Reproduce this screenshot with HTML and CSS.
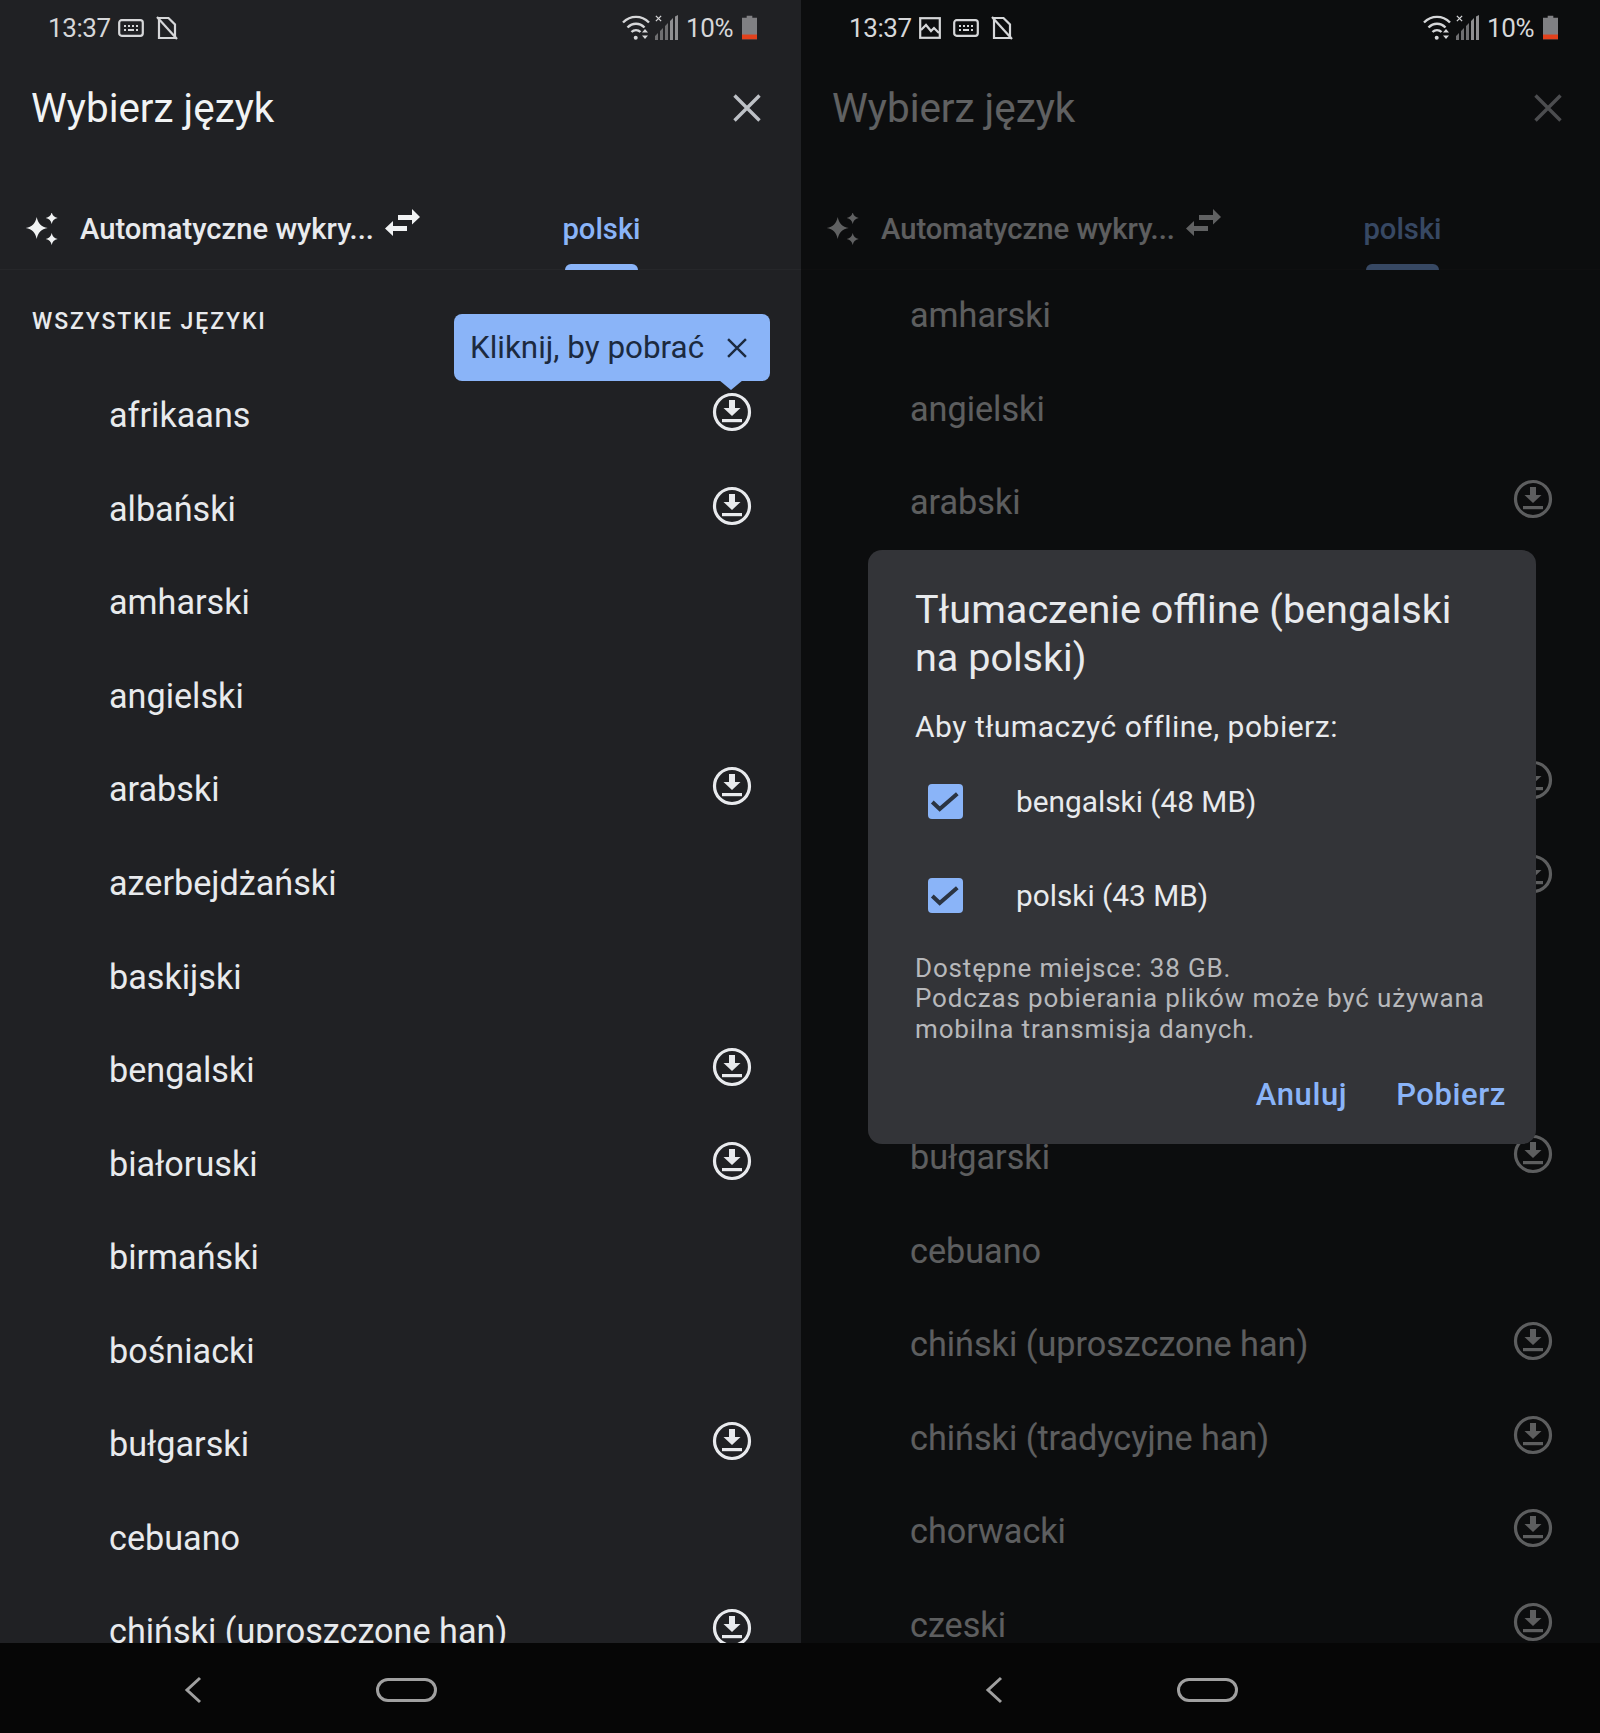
FILE: index.html
```html
<!DOCTYPE html>
<html lang="pl">
<head>
<meta charset="utf-8">
<title>Wybierz język</title>
<link rel="stylesheet" href="styles.css">
</head>
<body>
<svg class="sprite" aria-hidden="true">
  <symbol id="i-dl" viewBox="0 0 40 40"><circle cx="20" cy="20" r="17.5" fill="none" stroke="currentColor" stroke-width="3.2"/><path d="M17 8h6v8h5.5L20 24l-8.5-8H17z" fill="currentColor"/><rect x="10" y="27" width="20" height="3.2" fill="currentColor"/></symbol>
  <symbol id="i-close" viewBox="0 0 28 28"><path d="M1.5 1.5l25 25M26.5 1.5l-25 25" fill="none" stroke="currentColor" stroke-width="3.4"/></symbol>
  <symbol id="i-spark" viewBox="0 0 34 32"><path d="M11.700 4c1.300 6.500 4.500 9.700 11 11-6.500 1.300-9.700 4.500-11 11-1.300-6.500-4.500-9.700-11-11 6.500-1.300 9.700-4.500 11-11zM26.700-1c.7 3.500 2.500 5.300 6 6-3.500.7-5.300 2.500-6 6-.7-3.500-2.500-5.300-6-6 3.500-.7 5.300-2.500 6-6zM26.700 20c.7 3.500 2.500 5.300 6 6-3.500.7-5.300 2.500-6 6-.7-3.500-2.500-5.300-6-6 3.500-.7 5.300-2.500 6-6z" fill="currentColor"/></symbol>
  <symbol id="i-swap" viewBox="0 0 36 28"><path d="M13 6H27V0l8 8-8 7.500V11H13z" fill="currentColor"/><path d="M22 17H8V12L0 19.500 8 27V22H22z" fill="currentColor"/></symbol>
  <symbol id="i-kbd" viewBox="0 0 26 18"><rect x="1.200" y="1.200" width="23.600" height="15.600" rx="2.500" fill="none" stroke="currentColor" stroke-width="2.200"/><path d="M6 6h2v2H6zM10 6h2v2h-2zM14 6h2v2h-2zM18 6h2v2h-2zM6 10h2v2H6zM10 10h6v2h-6zM18 10h2v2h-2z" fill="currentColor"/></symbol>
  <symbol id="i-nosim" viewBox="0 0 22 24"><path d="M3 2h9.500L19 8.500V22H3z" fill="none" stroke="currentColor" stroke-width="2.200"/><path d="M1 1l20 22" stroke="currentColor" stroke-width="2.200"/></symbol>
  <symbol id="i-img" viewBox="0 0 22 22"><rect x="1.200" y="1.200" width="19.600" height="19.600" fill="none" stroke="currentColor" stroke-width="2.200"/><path d="M2 13l5-5 5 6 3-3 5 5" fill="none" stroke="currentColor" stroke-width="2.200"/></symbol>
  <symbol id="i-wifi" viewBox="0 0 28 25"><path d="M1 7.500C8.500 0 19.500 0 27 7.500M5.500 12.500C10.500 7.500 17.500 7.500 22.500 12.500M9.500 17C12 14.500 16 14.500 18.500 17" fill="none" stroke="currentColor" stroke-width="2.400"/><circle cx="13.700" cy="22.800" r="2" fill="currentColor"/><path d="M20 17.500l3-3.500 3 3.500zM20 20.500h6l-3 3.500z" fill="currentColor"/></symbol>
  <symbol id="i-signal" viewBox="0 0 24 25"><path d="M0 21l3-3v7H0zM5 16l3-3v12H5zM10 11l3-3v17h-3z" fill="#6f6f71"/><path d="M15 6l3-3v22h-3zM20 1.500l3-1.500v25h-3z" fill="#8f8f91"/></symbol>
  <symbol id="i-x" viewBox="0 0 8 8"><path d="M1 1l6 6M7 1l-6 6" stroke="currentColor" stroke-width="1.500"/></symbol>
  <symbol id="i-batt" viewBox="0 0 16 25"><path d="M5 0h6v2h5v23H0V2h5z" fill="#808083"/><rect y="20" width="16" height="5" fill="#e2411c"/></symbol>
  <symbol id="i-back" viewBox="0 0 18 28"><path d="M16 2L3 14l13 12" fill="none" stroke="currentColor" stroke-width="3"/></symbol>
  <symbol id="i-check" viewBox="0 0 35 35"><path d="M4.300 18l7.400 7L29.300 9.700" fill="none" stroke="currentColor" stroke-width="4"/></symbol>
</svg>

<main class="screens">
  <section class="panel">
    <div class="status">
      <div class="status-left">
        <span class="time">13:37</span>
        <svg class="ic-kbd"><use href="#i-kbd"/></svg>
        <svg class="ic-nosim"><use href="#i-nosim"/></svg>
      </div>
      <div class="status-right">
        <svg class="ic-wifi"><use href="#i-wifi"/></svg>
        <span class="signal"><svg class="ic-signal"><use href="#i-signal"/></svg><svg class="ic-x"><use href="#i-x"/></svg></span>
        <span class="pct">10%</span>
        <svg class="ic-batt"><use href="#i-batt"/></svg>
      </div>
    </div>
    <header class="title-row">
      <h1 class="title">Wybierz język</h1>
      <svg class="ic-close"><use href="#i-close"/></svg>
    </header>
    <div class="tabs">
      <div class="tab-source">
        <svg class="ic-spark"><use href="#i-spark"/></svg>
        <span class="tab-label">Automatyczne wykry...</span>
        <svg class="ic-swap"><use href="#i-swap"/></svg>
      </div>
      <div class="tab-target">
        <span class="tab-label tab-active">polski</span>
        <span class="tab-bar"></span>
      </div>
    </div>
    <div class="list">
      <div class="section-label">WSZYSTKIE JĘZYKI</div>
      <div class="row"><span>afrikaans</span><svg class="ic-dl"><use href="#i-dl"/></svg></div>
      <div class="row"><span>albański</span><svg class="ic-dl"><use href="#i-dl"/></svg></div>
      <div class="row"><span>amharski</span></div>
      <div class="row"><span>angielski</span></div>
      <div class="row"><span>arabski</span><svg class="ic-dl"><use href="#i-dl"/></svg></div>
      <div class="row"><span>azerbejdżański</span></div>
      <div class="row"><span>baskijski</span></div>
      <div class="row"><span>bengalski</span><svg class="ic-dl"><use href="#i-dl"/></svg></div>
      <div class="row"><span>białoruski</span><svg class="ic-dl"><use href="#i-dl"/></svg></div>
      <div class="row"><span>birmański</span></div>
      <div class="row"><span>bośniacki</span></div>
      <div class="row"><span>bułgarski</span><svg class="ic-dl"><use href="#i-dl"/></svg></div>
      <div class="row"><span>cebuano</span></div>
      <div class="row"><span>chiński (uproszczone han)</span><svg class="ic-dl"><use href="#i-dl"/></svg></div>
    </div>
    <div class="tooltip">
      <span>Kliknij, by pobrać</span>
      <svg class="ic-tipclose"><use href="#i-close"/></svg>
    </div>
    <nav class="navbar">
      <svg class="ic-back"><use href="#i-back"/></svg>
      <span class="home"></span>
    </nav>
  </section>

  <section class="panel panel-dim">
    <div class="status">
      <div class="status-left">
        <span class="time">13:37</span>
        <svg class="ic-img"><use href="#i-img"/></svg>
        <svg class="ic-kbd"><use href="#i-kbd"/></svg>
        <svg class="ic-nosim"><use href="#i-nosim"/></svg>
      </div>
      <div class="status-right">
        <svg class="ic-wifi"><use href="#i-wifi"/></svg>
        <span class="signal"><svg class="ic-signal"><use href="#i-signal"/></svg><svg class="ic-x"><use href="#i-x"/></svg></span>
        <span class="pct">10%</span>
        <svg class="ic-batt"><use href="#i-batt"/></svg>
      </div>
    </div>
    <header class="title-row">
      <h1 class="title">Wybierz język</h1>
      <svg class="ic-close"><use href="#i-close"/></svg>
    </header>
    <div class="tabs">
      <div class="tab-source">
        <svg class="ic-spark"><use href="#i-spark"/></svg>
        <span class="tab-label">Automatyczne wykry...</span>
        <svg class="ic-swap"><use href="#i-swap"/></svg>
      </div>
      <div class="tab-target">
        <span class="tab-label tab-active">polski</span>
        <span class="tab-bar"></span>
      </div>
    </div>
    <div class="list list-scrolled">
      <div class="row"><span>amharski</span></div>
      <div class="row"><span>angielski</span></div>
      <div class="row"><span>arabski</span><svg class="ic-dl"><use href="#i-dl"/></svg></div>
      <div class="row"><span>azerbejdżański</span></div>
      <div class="row"><span>baskijski</span></div>
      <div class="row"><span>bengalski</span><svg class="ic-dl"><use href="#i-dl"/></svg></div>
      <div class="row"><span>białoruski</span><svg class="ic-dl"><use href="#i-dl"/></svg></div>
      <div class="row"><span>birmański</span></div>
      <div class="row"><span>bośniacki</span></div>
      <div class="row"><span>bułgarski</span><svg class="ic-dl"><use href="#i-dl"/></svg></div>
      <div class="row"><span>cebuano</span></div>
      <div class="row"><span>chiński (uproszczone han)</span><svg class="ic-dl"><use href="#i-dl"/></svg></div>
      <div class="row"><span>chiński (tradycyjne han)</span><svg class="ic-dl"><use href="#i-dl"/></svg></div>
      <div class="row"><span>chorwacki</span><svg class="ic-dl"><use href="#i-dl"/></svg></div>
      <div class="row"><span>czeski</span><svg class="ic-dl"><use href="#i-dl"/></svg></div>
    </div>
    <div class="scrim"></div>
    <div class="dialog" role="dialog">
      <h2 class="dialog-title">Tłumaczenie offline (bengalski na&nbsp;polski)</h2>
      <p class="dialog-lead">Aby tłumaczyć offline, pobierz:</p>
      <div class="check-row"><span class="checkbox"><svg class="ic-check"><use href="#i-check"/></svg></span><span>bengalski (48 MB)</span></div>
      <div class="check-row"><span class="checkbox"><svg class="ic-check"><use href="#i-check"/></svg></span><span>polski (43 MB)</span></div>
      <p class="dialog-note">Dostępne miejsce: 38 GB.<br>Podczas pobierania plików może być używana mobilna transmisja danych.</p>
      <div class="dialog-actions"><span>Anuluj</span><span>Pobierz</span></div>
    </div>
    <nav class="navbar">
      <svg class="ic-back"><use href="#i-back"/></svg>
      <span class="home"></span>
    </nav>
  </section>
</main>
</body>
</html>
```

FILE: styles.css
```css
* { box-sizing: border-box; }
html, body { margin: 0; height: 100%; }
body { background: #0d0d0e; font-family: Roboto, "Liberation Sans", sans-serif; overflow: hidden; }
.sprite { display: none; }
svg { display: block; flex: none; }

.screens { display: grid; grid-template-columns: 801px 801px; height: 1733px; }
.panel { position: relative; display: flex; flex-direction: column; height: 1733px; overflow: hidden; background: #202124; color: #e8eaed; }

.status { position: relative; z-index: 2; flex: none; height: 54px; display: flex; align-items: center; justify-content: space-between; padding: 1px 44px 0 48px; color: #d6d7d9; }
.status-left, .status-right { display: flex; align-items: center; }
.time { font-size: 26px; letter-spacing: -0.4px; width: 61px; margin-right: 9px; }
.ic-kbd { width: 26px; height: 18px; margin-right: 12px; }
.ic-nosim { width: 22px; height: 24px; }
.ic-img { width: 22px; height: 22px; margin-right: 12px; }
.ic-wifi { width: 28px; height: 25px; }
.signal { position: relative; display: block; width: 24px; height: 25px; margin-left: 5px; }
.ic-signal { width: 24px; height: 25px; }
.ic-x { position: absolute; left: 0; top: 0; width: 7px; height: 7px; }
.pct { font-size: 26px; margin-left: 7px; width: 46px; letter-spacing: -0.3px; }
.ic-batt { width: 15px; height: 25px; margin-left: 10px; }

.title-row { flex: none; height: 108px; display: flex; align-items: center; justify-content: space-between; padding: 0 40px 0 31px; }
.title { margin: 0; font-size: 40.4px; font-weight: 400; color: #f1f3f4; }
.ic-close { width: 28px; height: 28px; color: #bdc1c6; }

.tabs { flex: none; height: 108px; display: grid; grid-template-columns: 401px 400px; border-bottom: 1px solid #26272a; }
.tab-source { display: flex; align-items: center; padding: 26px 0 0 25px; }
.ic-spark { width: 34px; height: 32px; margin-right: 21px; color: #f1f3f4; overflow: visible; }
.tab-label { font-size: 29.2px; font-weight: 500; white-space: nowrap; }
.ic-swap { width: 36px; height: 28px; margin: -11px 0 0 11px; color: #f1f3f4; }
.tab-target { display: flex; flex-direction: column; align-items: center; justify-content: flex-end; padding-left: 1px; }
.tab-active { color: #8ab4f8; margin-bottom: 18px; }
.tab-bar { width: 73px; height: 6px; border-radius: 6px 6px 0 0; background: #8ab4f8; margin-bottom: -1px; }

.list { flex: 1; min-height: 0; overflow: hidden; }
.list-scrolled .row:first-child { margin-top: -3px; }
.section-label { height: 97px; padding: 37px 0 0 32px; font-size: 23px; line-height: 30px; font-weight: 500; letter-spacing: 1.9px; color: #e8eaed; }
.row { height: 93.55px; display: flex; align-items: center; justify-content: space-between; padding: 3px 49px 0 109px; font-size: 34.2px; color: #e8eaed; white-space: nowrap; }
.ic-dl { width: 40px; height: 40px; color: #e8eaed; margin-top: -6px; }

.tooltip { position: absolute; left: 454px; top: 314px; width: 316px; height: 67px; padding: 0 23px 0 16px; border-radius: 8px; background: #8ab4f8; color: #1c2a3f; display: flex; align-items: center; justify-content: space-between; font-size: 31.4px; }
.tooltip::after { content: ""; position: absolute; left: 265px; top: 66px; border: 12px solid transparent; border-top: 10px solid #8ab4f8; border-bottom: 0; }
.ic-tipclose { width: 20px; height: 20px; color: #1c2a3f; }

.navbar { position: relative; z-index: 2; flex: none; height: 90px; background: #060606; color: #a0a0a0; display: flex; align-items: center; padding: 3px 0 0 184px; }
.ic-back { width: 18px; height: 28px; }
.home { display: block; width: 61px; height: 24px; border: 3px solid #a0a0a0; border-radius: 12px; margin-left: 174px; }

.scrim { position: absolute; inset: 0; z-index: 1; background: rgba(0, 0, 0, 0.6); }

.dialog { position: absolute; z-index: 3; left: 67px; top: 550px; width: 668px; height: 594px; padding: 36px 30px 0 47px; border-radius: 14px; background: #333438; color: #e8eaed; display: flex; flex-direction: column; }
.dialog-title { margin: 0; font-size: 39.6px; line-height: 48px; font-weight: 450; }
.dialog-lead { margin: 25px 0 8px; font-size: 30px; line-height: 40px; letter-spacing: 0.5px; }
.check-row { height: 93.5px; display: flex; align-items: center; font-size: 29.8px; flex: none; }
.checkbox { width: 35px; height: 35px; margin: 0 53px 0 13px; border-radius: 4px; background: #8ab4f8; color: #2b3442; flex: none; display: block; }
.ic-check { width: 35px; height: 35px; }
.dialog-note { margin: 10.5px 0 0; font-size: 26px; line-height: 30.5px; letter-spacing: 0.85px; color: #b7b8bb; }
.dialog-actions { margin-top: 32px; display: flex; justify-content: flex-end; gap: 49px; font-size: 31px; font-weight: 500; color: #8ab4f8; letter-spacing: 0.6px; }
```
